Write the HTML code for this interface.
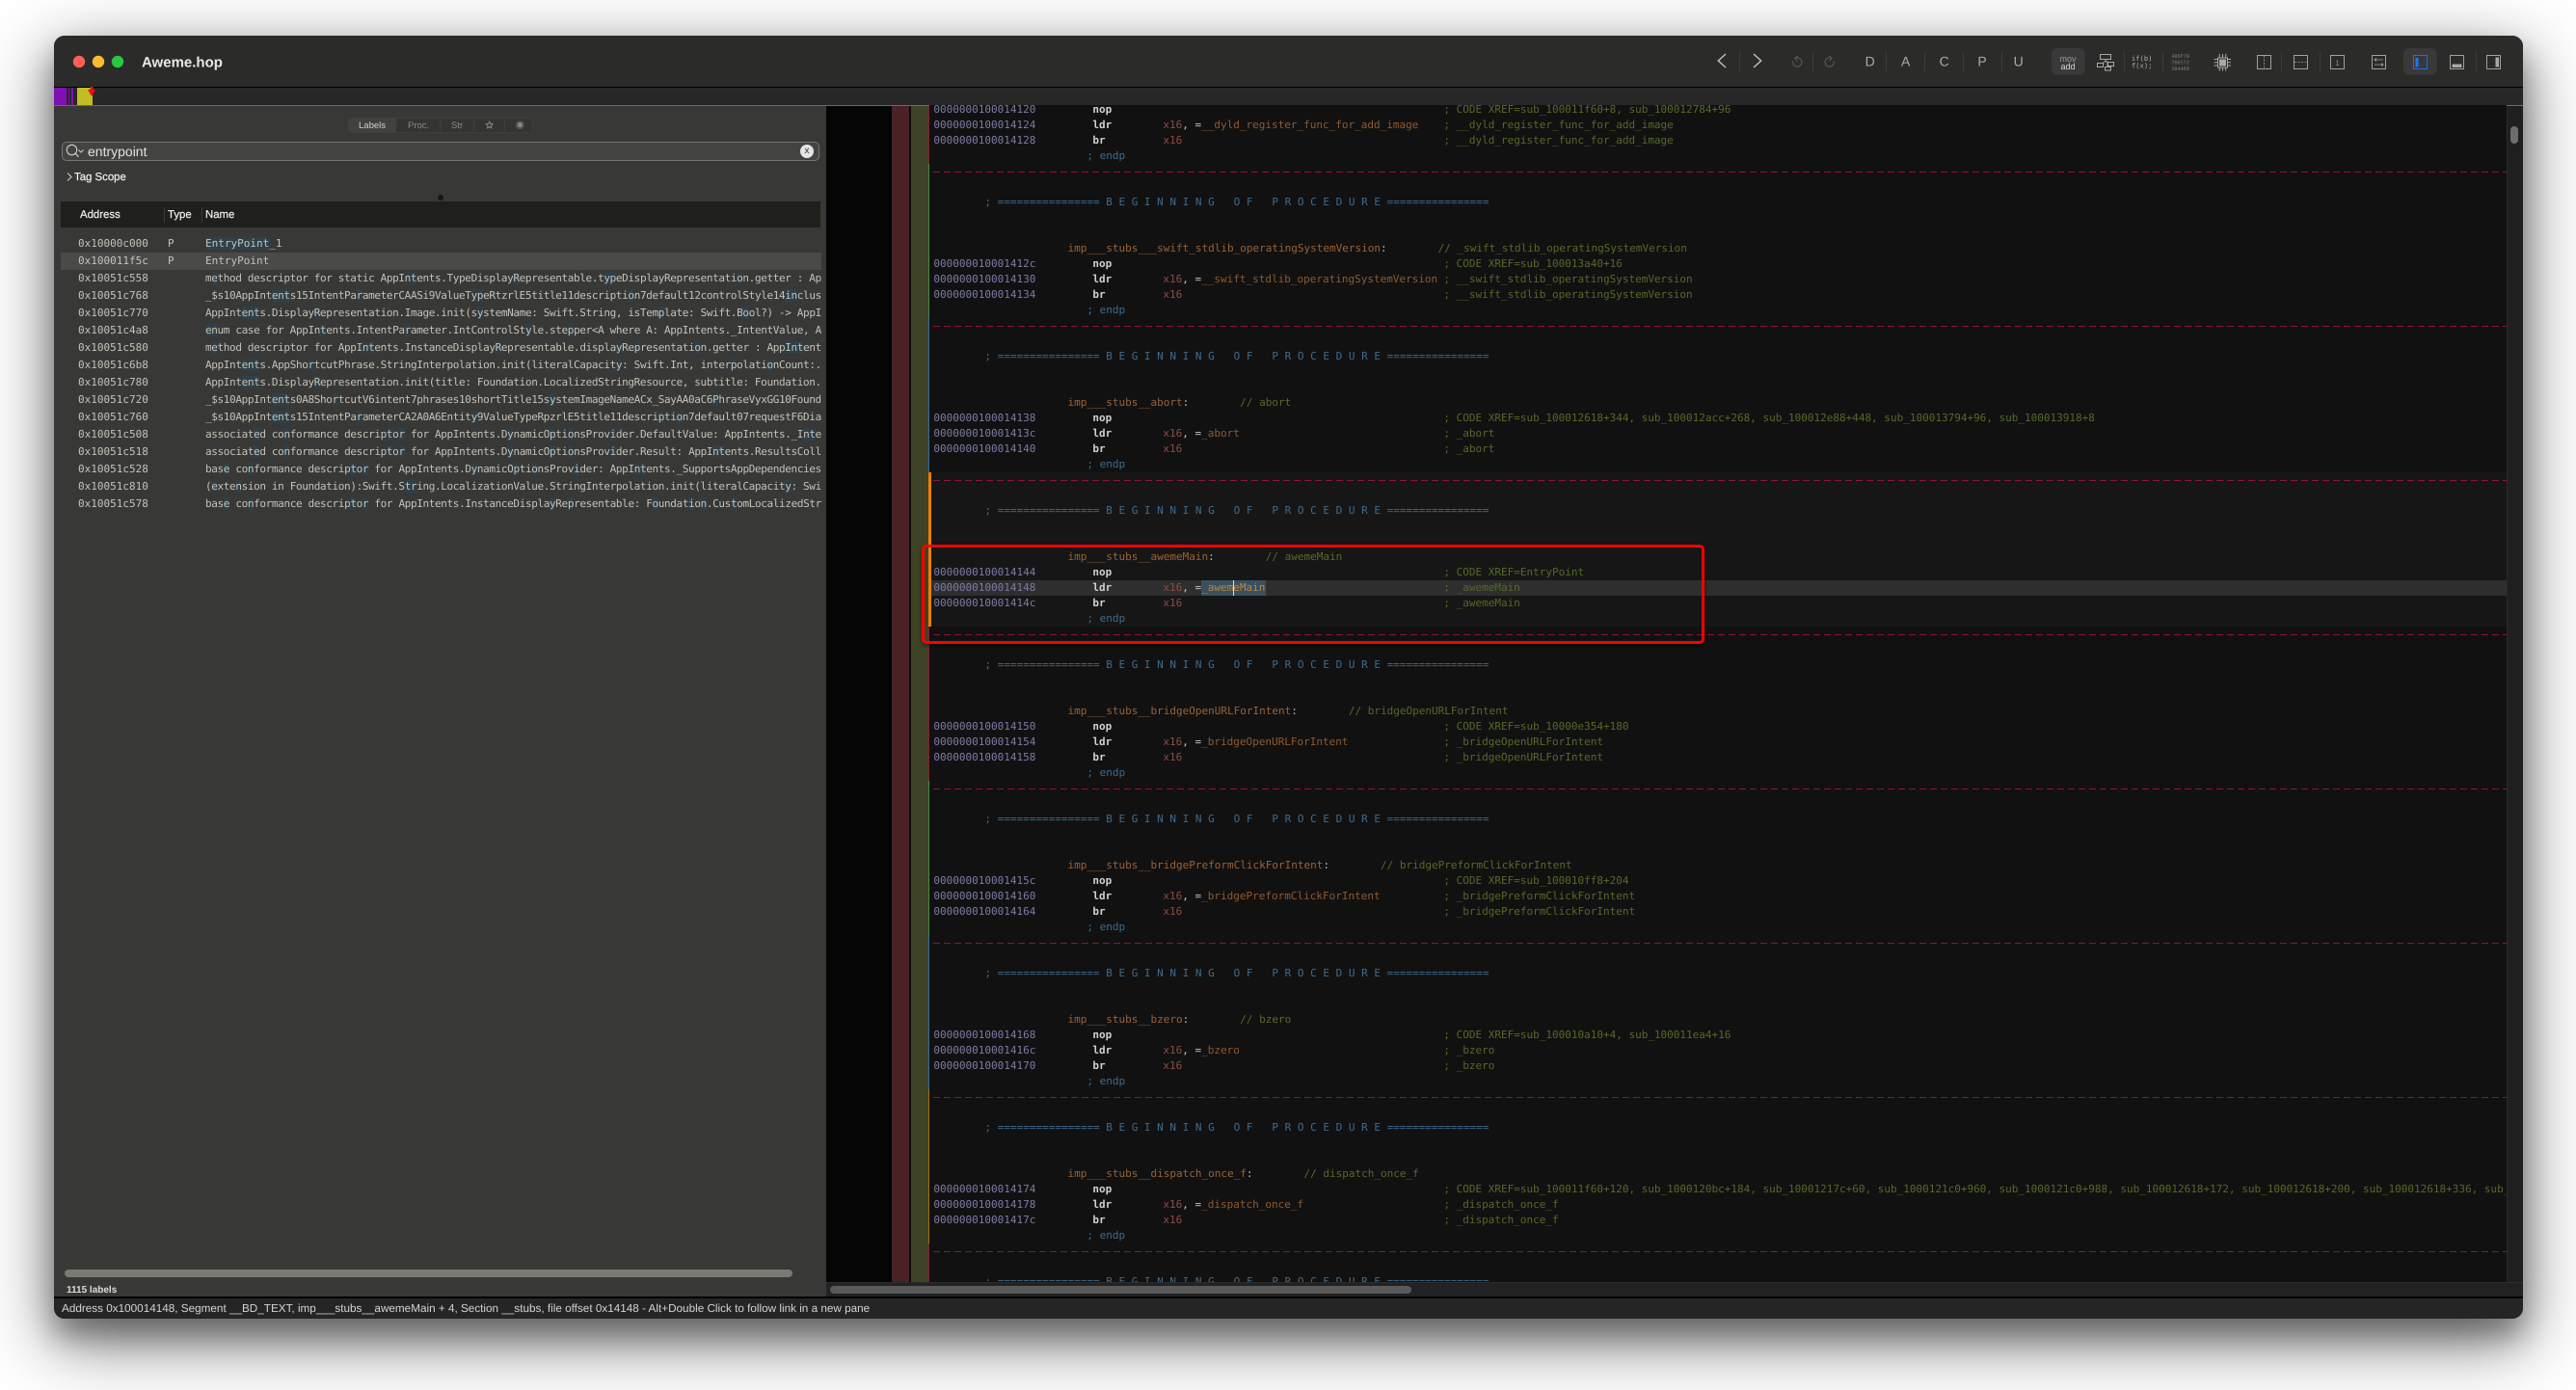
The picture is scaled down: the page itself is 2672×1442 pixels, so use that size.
<!DOCTYPE html>
<html><head><meta charset="utf-8"><title>Aweme.hop</title>
<style>
*{box-sizing:border-box}
html,body{margin:0;padding:0;background:#fff;width:2672px;height:1442px;overflow:hidden}
body{position:relative;font-family:"Liberation Sans",sans-serif;text-rendering:geometricPrecision}
.p{position:absolute}
#win{position:absolute;left:56px;top:37px;width:2561px;height:1331px;border-radius:11px;background:#2b2b2a;box-shadow:0 22px 70px 4px rgba(0,0,0,.5),0 18px 30px rgba(0,0,0,.32)}
#clip{position:absolute;left:56px;top:37px;width:2561px;height:1331px;border-radius:11px;overflow:hidden}
#clip>div{position:absolute}
.list{font-family:"DejaVu Sans Mono",monospace;font-size:11px;line-height:18px;color:#c4c4ba;white-space:pre}
.lr{position:absolute;left:0;height:18px;width:789px;overflow:hidden}
.lr i{font-style:normal;position:absolute;top:0}
.lr .ad{left:18px}.lr .ty{left:111px}.lr .nm{left:150px;letter-spacing:-.36px}
.lr .nm.w{letter-spacing:0}
.lr b{font-weight:normal;background:#2f4049}
#code{font-family:"DejaVu Sans Mono",monospace;font-size:11px;line-height:16px;color:#ccc}
.r{height:16px;padding-left:4.4px;white-space:pre}
.r i{font-style:normal;display:inline-block;vertical-align:top}
.a{width:165px;color:#7c7ca6}
.m{width:73px;color:#d0d0d0;font-weight:bold}
.o{width:291px;color:#8d4d43;overflow:visible}
.o u{text-decoration:none;color:#8f5a2e}
.o s{text-decoration:none;color:#c6c6c6}
.c{color:#566a26}
.h{color:#3c6c90}
.l{color:#9a6236}
.k{color:#bbb}
.d{position:absolute;left:4px;right:0;height:1px;background:repeating-linear-gradient(90deg,#8e1240 0 7px,transparent 7px 11px)}
</style></head>
<body>
<div id="win"></div>
<div id="clip">
  <!-- toolbar -->
  <div style="left:0;top:0;width:2561px;height:53px;background:#2b2b2a"></div>
  <div style="left:0;top:53px;width:2561px;height:1px;background:#000"></div>
  <!-- tabs -->
  <div style="left:0;top:54px;width:2561px;height:18px;background:#272727"></div>
  <div style="left:0;top:72px;width:2561px;height:1px;background:#6a6a6a"></div>
  <div style="left:0;top:54px;width:13px;height:18px;background:#8010b0"></div>
  <div style="left:15px;top:54px;width:1px;height:18px;background:#8010b0"></div>
  <div style="left:18px;top:54px;width:2px;height:18px;background:#8010b0"></div>
  <div style="left:24px;top:54px;width:16px;height:18px;background:#c2bd24"></div>
  <!-- sidebar -->
  <div style="left:0;top:73px;width:801px;height:1235px;background:#383836"></div>
  <div style="left:305px;top:85px;width:192px;height:16px;border-radius:5px;background:#343432;border:1px solid #3e3e3c"></div>
  <div style="left:305px;top:85px;width:50px;height:16px;border-radius:5px 0 0 5px;background:#41413f"></div>
  <div style="left:8px;top:110px;width:786px;height:20px;border-radius:5px;background:#434341;border:1px solid #767674"></div>
  <div style="left:35px;top:110px;height:20px;line-height:20px;font-size:14px;color:#e2e2e0">entrypoint</div>
  <div style="left:774px;top:113px;width:14px;height:14px;border-radius:50%;background:#e4e4e4;color:#333;font-size:10px;line-height:13px;text-align:center">x</div>
  <div style="left:21px;top:139px;height:16px;line-height:16px;font-size:11.4px;color:#eee;-webkit-text-stroke:.2px #eee">Tag Scope</div>
  <div style="left:397.5px;top:164.5px;width:6px;height:6px;border-radius:50%;background:#161616"></div>
  <div style="left:7px;top:172px;width:788px;height:27px;background:#1f1f1b"></div>
  <div style="left:27px;top:172px;height:27px;line-height:29px;font-size:11.4px;color:#eee;-webkit-text-stroke:.2px #eee">Address</div>
  <div style="left:118px;top:172px;height:27px;line-height:29px;font-size:11.4px;color:#eee;-webkit-text-stroke:.2px #eee">Type</div>
  <div style="left:157px;top:172px;height:27px;line-height:29px;font-size:11.4px;color:#eee;-webkit-text-stroke:.2px #eee">Name</div>
  <div style="left:114px;top:178px;width:1px;height:16px;background:#3c3c36"></div>
  <div style="left:153px;top:178px;width:1px;height:16px;background:#3c3c36"></div>
  <div class="list" style="left:7px;top:206px;width:789px;height:300px">
    <div class="lr" style="top:1px"><i class="ad" style="left:18px">0x10000c000</i><i class="ty">P</i><i class="nm w"><b>EntryPoint</b>_1</i></div>
    <div class="lr" style="top:19px;background:#4a4a48"><i class="ad">0x100011f5c</i><i class="ty">P</i><i class="nm w">EntryPoint</i></div>
    <div class="lr" style="top:37px"><i class="ad">0x10051c558</i><i class="nm">m<b>e</b>thod descriptor for static AppI<b>nt</b>ents.TypeDisplay<b>R</b>epresentable.t<b>yp</b>eDisplayRepresentati<b>o</b>n.getter : AppIntents</i></div>
    <div class="lr" style="top:55px"><i class="ad">0x10051c768</i><i class="nm">_$s10AppInt<b>ent</b>s15IntentPa<b>r</b>ameterCAASi9ValueT<b>yp</b>eRtzrlE5title11descripti<b>o</b>n7default12controlStyle14<b>in</b>clusive</i></div>
    <div class="lr" style="top:73px"><i class="ad">0x10051c770</i><i class="nm">AppInt<b>ent</b>s.Display<b>R</b>epresentation.Image.init(s<b>y</b>stemName: Swift.String, isTem<b>p</b>late: Swift.B<b>o</b>ol?) -&gt; AppIntents</i></div>
    <div class="lr" style="top:91px"><i class="ad">0x10051c4a8</i><i class="nm"><b>en</b>um case for AppIn<b>t</b>ents.IntentPa<b>r</b>ameter.IntControlSt<b>y</b>le.ste<b>p</b>per&lt;A where A: AppIntents._IntentValue, A</i></div>
    <div class="lr" style="top:109px"><i class="ad">0x10051c580</i><i class="nm">m<b>e</b>thod descriptor for AppI<b>nt</b>ents.InstanceDisplay<b>R</b>epresentable.displa<b>y</b>Re<b>p</b>resentati<b>o</b>n.getter : App<b>Int</b>ents</i></div>
    <div class="lr" style="top:127px"><i class="ad">0x10051c6b8</i><i class="nm">AppInt<b>ent</b>s.AppSho<b>r</b>tcutPhrase.StringInterpolation.init(literalCapacit<b>y</b>: Swift.Int, inter<b>p</b>olati<b>o</b>nCount:..</i></div>
    <div class="lr" style="top:145px"><i class="ad">0x10051c780</i><i class="nm">AppInt<b>ent</b>s.Display<b>R</b>epresentation.init(title: Foundation.LocalizedStringResource, subtitle: Foundation.</i></div>
    <div class="lr" style="top:163px"><i class="ad">0x10051c720</i><i class="nm">_$s10AppInt<b>ent</b>s0A8Sho<b>r</b>tcutV6intent7phrases10shortTitle15s<b>y</b>stemImageNameACx_SayAA0aC6<b>P</b>hraseVyxGG10Found</i></div>
    <div class="lr" style="top:181px"><i class="ad">0x10051c760</i><i class="nm">_$s10AppInt<b>ent</b>s15IntentPa<b>r</b>ameterCA2A0A6Entit<b>y</b>9ValueTypeRpzrlE5title11descri<b>p</b>ti<b>o</b>n7default07requestF6Dia</i></div>
    <div class="lr" style="top:199px"><i class="ad">0x10051c508</i><i class="nm">associat<b>e</b>d co<b>n</b>formance descrip<b>t</b>o<b>r</b> for AppIntents.D<b>y</b>namicO<b>p</b>ti<b>o</b>nsProv<b>i</b>der.DefaultValue: AppIntents._I<b>nt</b>ent</i></div>
    <div class="lr" style="top:217px"><i class="ad">0x10051c518</i><i class="nm">associat<b>e</b>d co<b>n</b>formance descrip<b>t</b>o<b>r</b> for AppIntents.D<b>y</b>namicO<b>p</b>ti<b>o</b>nsProv<b>i</b>der.Result: AppI<b>nt</b>ents.ResultsCollection</i></div>
    <div class="lr" style="top:235px"><i class="ad">0x10051c528</i><i class="nm">bas<b>e</b> co<b>n</b>formance descrip<b>t</b>o<b>r</b> for AppIntents.D<b>y</b>namicO<b>p</b>ti<b>o</b>nsProv<b>i</b>der: AppI<b>nt</b>ents._SupportsAppDependencies</i></div>
    <div class="lr" style="top:253px"><i class="ad">0x10051c810</i><i class="nm">(<b>e</b>xte<b>n</b>sion in Foundation):Swift.S<b>tr</b>ing.LocalizationValue.StringInterpolation.init(literalCapacit<b>y</b>: Swift</i></div>
    <div class="lr" style="top:271px"><i class="ad">0x10051c578</i><i class="nm">bas<b>e</b> co<b>n</b>formance descrip<b>t</b>o<b>r</b> for AppIntents.InstanceDispla<b>y</b>Re<b>p</b>resentable: F<b>o</b>undat<b>i</b>o<b>n</b>.Cus<b>t</b>omLocalizedString</i></div>
  </div>
  <div style="left:11px;top:1280px;width:755px;height:8px;border-radius:4px;background:#7b7b74"></div>
  <div style="left:13px;top:1295px;height:14px;line-height:14px;font-size:10px;font-weight:bold;color:#ddd">1115 labels</div>
  <!-- gutters -->
  <div style="left:801px;top:73px;width:68px;height:1235px;background:#050505"></div>
  <div style="left:869px;top:73px;width:19px;height:1220px;background:#4a2226"></div>
  <div style="left:887px;top:73px;width:2px;height:1220px;background:#0d0d0d"></div>
  <div style="left:889px;top:73px;width:18px;height:1220px;background:#3f4326"></div>
  <!-- code -->
  <div style="left:908px;top:72px;width:1636px;height:1221px;background:#111;overflow:hidden" id="codewrap">
    <div class="p" style="left:0;right:0;top:381px;height:160px;background:#161616"></div>
    <div class="p" style="left:0;right:0;top:492.5px;height:16.5px;background:#2e2e2e"></div>
    <div class="p" style="left:282px;top:493px;width:67px;height:16px;background:#3a505d"></div>
    <div class="d" style="top:69px"></div><div class="d" style="top:229px"></div><div class="d" style="top:389px"></div><div class="d" style="top:549px"></div><div class="d" style="top:709px"></div><div class="d" style="top:869px"></div><div class="d" style="top:1029px"></div><div class="d" style="top:1189px"></div>
    <div id="code" class="p" style="left:0;top:-2.7px;width:1636px;height:1224px;overflow:hidden">
<div class="r"><i class="a">0000000100014120</i><i class="m">nop</i><i class="o"></i><i class="c">; CODE XREF=sub_100011f60+8, sub_100012784+96</i></div>
<div class="r"><i class="a">0000000100014124</i><i class="m">ldr</i><i class="o">x16<s>, =</s><u>__dyld_register_func_for_add_image</u></i><i class="c">; __dyld_register_func_for_add_image</i></div>
<div class="r"><i class="a">0000000100014128</i><i class="m">br</i><i class="o">x16</i><i class="c">; __dyld_register_func_for_add_image</i></div>
<div class="r"><i class="h">                        ; endp</i></div>
<div class="r"></div><div class="r"></div>
<div class="r"><i class="h">        ; ================ B E G I N N I N G   O F   P R O C E D U R E ================</i></div>
<div class="r"></div><div class="r"></div>
<div class="r"><i class="l">                     imp___stubs___swift_stdlib_operatingSystemVersion</i><i class="k">:</i><i class="c">        // _swift_stdlib_operatingSystemVersion</i></div>
<div class="r"><i class="a">000000010001412c</i><i class="m">nop</i><i class="o"></i><i class="c">; CODE XREF=sub_100013a40+16</i></div>
<div class="r"><i class="a">0000000100014130</i><i class="m">ldr</i><i class="o">x16<s>, =</s><u>__swift_stdlib_operatingSystemVersion</u></i><i class="c">; __swift_stdlib_operatingSystemVersion</i></div>
<div class="r"><i class="a">0000000100014134</i><i class="m">br</i><i class="o">x16</i><i class="c">; __swift_stdlib_operatingSystemVersion</i></div>
<div class="r"><i class="h">                        ; endp</i></div>
<div class="r"></div><div class="r"></div>
<div class="r"><i class="h">        ; ================ B E G I N N I N G   O F   P R O C E D U R E ================</i></div>
<div class="r"></div><div class="r"></div>
<div class="r"><i class="l">                     imp___stubs__abort</i><i class="k">:</i><i class="c">        // abort</i></div>
<div class="r"><i class="a">0000000100014138</i><i class="m">nop</i><i class="o"></i><i class="c">; CODE XREF=sub_100012618+344, sub_100012acc+268, sub_100012e88+448, sub_100013794+96, sub_100013918+8</i></div>
<div class="r"><i class="a">000000010001413c</i><i class="m">ldr</i><i class="o">x16<s>, =</s><u>_abort</u></i><i class="c">; _abort</i></div>
<div class="r"><i class="a">0000000100014140</i><i class="m">br</i><i class="o">x16</i><i class="c">; _abort</i></div>
<div class="r"><i class="h">                        ; endp</i></div>
<div class="r"></div><div class="r"></div>
<div class="r"><i class="h">        ; ================ B E G I N N I N G   O F   P R O C E D U R E ================</i></div>
<div class="r"></div><div class="r"></div>
<div class="r"><i class="l">                     imp___stubs__awemeMain</i><i class="k">:</i><i class="c">        // awemeMain</i></div>
<div class="r"><i class="a">0000000100014144</i><i class="m">nop</i><i class="o"></i><i class="c">; CODE XREF=EntryPoint</i></div>
<div class="r"><i class="a">0000000100014148</i><i class="m">ldr</i><i class="o">x16<s>, =</s><u style="color:#bd8744">_awemeMain</u></i><i class="c">; _awemeMain</i></div>
<div class="r"><i class="a">000000010001414c</i><i class="m">br</i><i class="o">x16</i><i class="c">; _awemeMain</i></div>
<div class="r"><i class="h">                        ; endp</i></div>
<div class="r"></div><div class="r"></div>
<div class="r"><i class="h">        ; ================ B E G I N N I N G   O F   P R O C E D U R E ================</i></div>
<div class="r"></div><div class="r"></div>
<div class="r"><i class="l">                     imp___stubs__bridgeOpenURLForIntent</i><i class="k">:</i><i class="c">        // bridgeOpenURLForIntent</i></div>
<div class="r"><i class="a">0000000100014150</i><i class="m">nop</i><i class="o"></i><i class="c">; CODE XREF=sub_10000e354+180</i></div>
<div class="r"><i class="a">0000000100014154</i><i class="m">ldr</i><i class="o">x16<s>, =</s><u>_bridgeOpenURLForIntent</u></i><i class="c">; _bridgeOpenURLForIntent</i></div>
<div class="r"><i class="a">0000000100014158</i><i class="m">br</i><i class="o">x16</i><i class="c">; _bridgeOpenURLForIntent</i></div>
<div class="r"><i class="h">                        ; endp</i></div>
<div class="r"></div><div class="r"></div>
<div class="r"><i class="h">        ; ================ B E G I N N I N G   O F   P R O C E D U R E ================</i></div>
<div class="r"></div><div class="r"></div>
<div class="r"><i class="l">                     imp___stubs__bridgePreformClickForIntent</i><i class="k">:</i><i class="c">        // bridgePreformClickForIntent</i></div>
<div class="r"><i class="a">000000010001415c</i><i class="m">nop</i><i class="o"></i><i class="c">; CODE XREF=sub_100010ff8+204</i></div>
<div class="r"><i class="a">0000000100014160</i><i class="m">ldr</i><i class="o">x16<s>, =</s><u>_bridgePreformClickForIntent</u></i><i class="c">; _bridgePreformClickForIntent</i></div>
<div class="r"><i class="a">0000000100014164</i><i class="m">br</i><i class="o">x16</i><i class="c">; _bridgePreformClickForIntent</i></div>
<div class="r"><i class="h">                        ; endp</i></div>
<div class="r"></div><div class="r"></div>
<div class="r"><i class="h">        ; ================ B E G I N N I N G   O F   P R O C E D U R E ================</i></div>
<div class="r"></div><div class="r"></div>
<div class="r"><i class="l">                     imp___stubs__bzero</i><i class="k">:</i><i class="c">        // bzero</i></div>
<div class="r"><i class="a">0000000100014168</i><i class="m">nop</i><i class="o"></i><i class="c">; CODE XREF=sub_100010a10+4, sub_100011ea4+16</i></div>
<div class="r"><i class="a">000000010001416c</i><i class="m">ldr</i><i class="o">x16<s>, =</s><u>_bzero</u></i><i class="c">; _bzero</i></div>
<div class="r"><i class="a">0000000100014170</i><i class="m">br</i><i class="o">x16</i><i class="c">; _bzero</i></div>
<div class="r"><i class="h">                        ; endp</i></div>
<div class="r"></div><div class="r"></div>
<div class="r"><i class="h">        ; ================ B E G I N N I N G   O F   P R O C E D U R E ================</i></div>
<div class="r"></div><div class="r"></div>
<div class="r"><i class="l">                     imp___stubs__dispatch_once_f</i><i class="k">:</i><i class="c">        // dispatch_once_f</i></div>
<div class="r"><i class="a">0000000100014174</i><i class="m">nop</i><i class="o"></i><i class="c">; CODE XREF=sub_100011f60+120, sub_1000120bc+184, sub_10001217c+60, sub_1000121c0+960, sub_1000121c0+988, sub_100012618+172, sub_100012618+200, sub_100012618+336, sub_</i></div>
<div class="r"><i class="a">0000000100014178</i><i class="m">ldr</i><i class="o">x16<s>, =</s><u>_dispatch_once_f</u></i><i class="c">; _dispatch_once_f</i></div>
<div class="r"><i class="a">000000010001417c</i><i class="m">br</i><i class="o">x16</i><i class="c">; _dispatch_once_f</i></div>
<div class="r"><i class="h">                        ; endp</i></div>
<div class="r"></div><div class="r"></div>
<div class="r"><i class="h">        ; ================ B E G I N N I N G   O F   P R O C E D U R E ================</i></div>
    </div>
    <div class="p" style="left:315px;top:493px;width:1px;height:16px;background:#ddd"></div>
  </div>
  <!-- left colored lines -->
  <div style="left:907px;top:73px;width:1px;height:60px;background:#8a1c2c"></div>
  <div style="left:907px;top:133px;width:1px;height:160px;background:#3f8f3f"></div>
  <div style="left:907px;top:293px;width:1px;height:160px;background:#2f6ea5"></div>
  <div style="left:907px;top:453px;width:3px;height:160px;background:#f07d00"></div>
  <div style="left:907px;top:613px;width:1px;height:160px;background:#8a1c2c"></div>
  <div style="left:907px;top:773px;width:1px;height:160px;background:#3f8f3f"></div>
  <div style="left:907px;top:933px;width:1px;height:160px;background:#2f6ea5"></div>
  <div style="left:907px;top:1093px;width:1px;height:160px;background:#b06a10"></div>
  <div style="left:907px;top:1253px;width:1px;height:40px;background:#8a1c2c"></div>
  <!-- right scrollbar -->
  <div style="left:2544px;top:73px;width:17px;height:1220px;background:#1f1f1f;border-left:1px solid #2c2c2c"></div>
  <div style="left:2548px;top:94px;width:8px;height:18px;border-radius:4px;background:#6d6d6d"></div>
  <!-- bottom scrollbar -->
  <div style="left:801px;top:1293px;width:1760px;height:15px;background:#222;border-top:1px solid #2c2c2c"></div>
  <div style="left:805px;top:1297px;width:603px;height:8px;border-radius:4px;background:#5a5a5a"></div>
  <!-- status -->
  <div style="left:0;top:1308px;width:2561px;height:2px;background:#000"></div>
  <div style="left:0;top:1310px;width:2561px;height:21px;background:#252525"></div>
  <div style="left:8px;top:1311px;height:20px;line-height:20px;font-size:11.72px;color:#d4d4d4;white-space:pre">Address 0x100014148, Segment __BD_TEXT, imp___stubs__awemeMain + 4, Section __stubs, file offset 0x14148 - Alt+Double Click to follow link in a new pane</div>
</div>
<!-- red annotation -->
<div class="p" style="left:956px;top:565px;width:812px;height:103px;border:3px solid #f00;border-radius:5px;box-shadow:0 2px 5px rgba(0,0,0,.45)"></div>
<!-- overlay icons / toolbar -->
<svg class="p" style="left:0;top:0" width="2672" height="1442" viewBox="0 0 2672 1442" fill="none">
  <circle cx="82" cy="64" r="6.2" fill="#ff5f57"/><circle cx="102" cy="64" r="6.2" fill="#febc2e"/><circle cx="122" cy="64" r="6.2" fill="#28c840"/>
  <text x="147" y="69.5" font-family="Liberation Sans" font-size="15" font-weight="bold" fill="#e8e8e8">Aweme.hop</text>
  <path d="M91 93h8l-4 7z" fill="#f01010"/><rect x="93.5" y="90" width="3" height="4" fill="#f01010"/>
  <!-- segmented labels -->
  <g font-family="Liberation Sans" font-size="9.5">
    <text x="372" y="133" fill="#d0d0ce">Labels</text>
    <text x="423" y="133" fill="#8c8c8a">Proc.</text>
    <text x="468" y="133" fill="#8c8c8a">Str</text>
  </g>
  <path d="M456.7 124v12M491.7 124v12M523.3 124v12" stroke="#42423f"/>
  <path d="M507.7 126l1 2.4 2.6.2-2 1.7.6 2.6-2.2-1.4-2.2 1.4.6-2.6-2-1.7 2.6-.2z" stroke="#8a8a88" stroke-width=".9"/>
  <circle cx="539.3" cy="129.7" r="2.8" fill="#858583"/><circle cx="539.3" cy="129.7" r="3.8" stroke="#5c5c5a"/>
  <!-- search icon -->
  <circle cx="74.5" cy="155.5" r="5.2" stroke="#cfcfcd" stroke-width="1.1"/><path d="M78.3 159.3l3.2 3.4" stroke="#cfcfcd" stroke-width="1.2"/><path d="M81.5 155.5l2.5 2.5 2.5-2.5" stroke="#cfcfcd"/>
  <path d="M70 179.5l4 4-4 4" stroke="#c8c8c6" stroke-width="1.1"/>
  <!-- nav -->
  <path d="M1790 56l-7.7 7 7.7 7M1819 56l7.7 7-7.7 7" stroke="#bdbdbd" stroke-width="1.5"/>
  <g stroke="#3c3c3b">
    <path d="M1804.5 54v20M1880.5 54v20M1956.5 54v20M1996.5 54v20M2036.5 54v20M2076.5 54v20M2203.5 54v20M2243.5 54v20M2366.5 54v20M2406.5 54v20M2568.5 54v20"/>
  </g>
  <path d="M1862 60.5a4.6 4.6 0 1 1-2.2 3M1865 58l-3.2 2.4 2.6 3" stroke="#525252" stroke-width="1.3"/>
  <path d="M1900 60.5a4.6 4.6 0 1 0 2.2 3M1897 58l3.2 2.4-2.6 3" stroke="#525252" stroke-width="1.3"/>
  <g font-family="Liberation Sans" font-size="14" fill="#ababab" text-anchor="middle">
    <text x="1939.7" y="68.3">D</text><text x="1976.7" y="68.3">A</text><text x="2016.7" y="68.3">C</text><text x="2056" y="68.3">P</text><text x="2093.7" y="68.3">U</text>
  </g>
  <rect x="2128" y="50" width="34.7" height="27.7" rx="6" fill="#393939"/>
  <rect x="2493" y="50" width="34.7" height="27.7" rx="6" fill="#393939"/>
  <g font-family="Liberation Sans" font-size="9" text-anchor="middle">
    <text x="2145" y="64" fill="#9c9c9c">mov</text><text x="2145" y="72" fill="#d8d8d8">add</text>
  </g>
  <!-- CFG -->
  <g stroke="#a8a8a8">
    <rect x="2178.5" y="56.5" width="11" height="5"/><rect x="2175.5" y="65.5" width="6" height="4"/><rect x="2186.5" y="64.5" width="6" height="4"/><rect x="2183.5" y="69.5" width="6" height="3.5"/>
    <path d="M2184 61.5v2M2181 65.5l3-2 3 1M2186 64v5"/>
  </g>
  <g font-family="DejaVu Sans Mono" font-size="7.2" fill="#b0b0b0" text-anchor="end">
    <text x="2232.5" y="63">if(b)</text><text x="2232.5" y="70.5">f(x);</text>
  </g>
  <g font-family="DejaVu Sans Mono" font-size="5.2" fill="#7c7c7c" text-anchor="middle">
    <text x="2261.7" y="60">486F70</text><text x="2261.7" y="66.5">706572</text><text x="2261.7" y="73">204469</text>
  </g>
  <!-- chip -->
  <rect x="2300.5" y="60" width="10" height="10" stroke="#a8a8a8"/><rect x="2302" y="61.5" width="7" height="7" fill="#a8a8a8"/>
  <path d="M2302.3 56v4M2305.5 56v4M2308.7 56v4M2302.3 70v3.5M2305.5 70v3.5M2308.7 70v3.5M2296.7 61.5h3.8M2296.7 64.7h3.8M2296.7 68h3.8M2310.5 61.5h3.5M2310.5 64.7h3.5M2310.5 68h3.5" stroke="#a8a8a8"/>
  <!-- panes -->
  <g stroke="#a0a0a0">
    <rect x="2341.5" y="57.5" width="14" height="14"/><path d="M2348.5 58v13" stroke-dasharray="2 1.5" stroke-width=".8"/>
    <rect x="2379.5" y="57.5" width="14" height="14"/><path d="M2380 64.5h13" stroke-dasharray="2 1.5" stroke-width=".8"/>
    <rect x="2417.5" y="57.5" width="14" height="14"/>
    <rect x="2460.5" y="57.5" width="14" height="14"/><path d="M2463 62h9M2472 67h-9M2465 60.5l-2 1.5 2 1.5M2470 65.5l2 1.5-2 1.5" stroke-width=".8"/>
    <rect x="2541.5" y="57.5" width="14" height="14"/>
    <rect x="2579.5" y="57.5" width="14" height="14"/>
  </g>
  <text x="2424.5" y="68" font-family="Liberation Sans" font-size="8" fill="#8a8a8a" text-anchor="middle">1</text>
  <rect x="2503.5" y="57.5" width="14" height="14" stroke="#1c6cf0"/><rect x="2505.5" y="60" width="3" height="9.5" fill="#1c78f5"/>
  <rect x="2543.5" y="66.5" width="10" height="3.5" fill="#a8a8a8"/>
  <rect x="2588.5" y="59.5" width="3.5" height="10" fill="#a8a8a8"/>
</svg>
</body></html>
